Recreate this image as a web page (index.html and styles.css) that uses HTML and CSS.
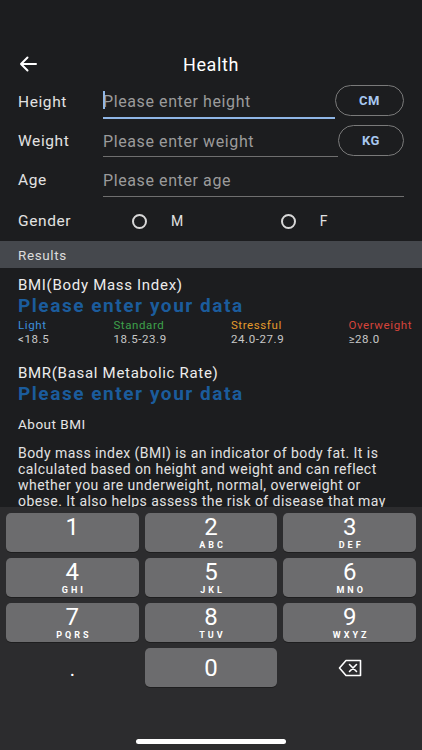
FILE: index.html
```html
<!DOCTYPE html>
<html>
<head>
	<meta charset="UTF-8">
	<title>Health</title>
	<link rel="stylesheet" href="styles.css">
</head>
<body>
	<div class="page">
		<div class="header">
			<div class="back">
				<svg width="18" height="16" viewBox="0 0 18 16"><path d="M17 8H2M8.5 1.5L2 8l6.5 6.5" fill="none" stroke="#fff" stroke-width="2" stroke-linecap="round" stroke-linejoin="round"/></svg>
			</div>
			<h1>Health</h1>
		</div>
		<div class="form">
			<div class="row row_height">
				<span class="label">Height</span>
				<div class="input active"><span class="caret"></span>Please enter height</div>
				<div class="pill pill_cm">CM</div>
			</div>
			<div class="row row_weight">
				<span class="label">Weight</span>
				<div class="input">Please enter weight</div>
				<div class="pill pill_kg">KG</div>
			</div>
			<div class="row row_age">
				<span class="label">Age</span>
				<div class="input">Please enter age</div>
			</div>
			<div class="row row_gender">
				<span class="label">Gender</span>
				<div class="radio radio_m"><i></i>M</div>
				<div class="radio radio_f"><i></i>F</div>
			</div>
		</div>
		<div class="band">Results</div>
		<div class="results">
			<h2>BMI(Body Mass Index)</h2>
			<div class="value">Please enter your data</div>
			<div class="scale">
				<div><span class="c_light">Light</span><span>&lt;18.5</span></div>
				<div><span class="c_std">Standard</span><span>18.5-23.9</span></div>
				<div><span class="c_str">Stressful</span><span>24.0-27.9</span></div>
				<div><span class="c_over">Overweight</span><span>≥28.0</span></div>
			</div>
			<h2 class="bmr">BMR(Basal Metabolic Rate)</h2>
			<div class="value">Please enter your data</div>
			<h3>About BMI</h3>
			<p>Body mass index (BMI) is an indicator of body fat. It is calculated based on height and weight and can reflect whether you are underweight, normal, overweight or obese. It also helps assess the risk of disease that may</p>
		</div>
	</div>
	<div class="keyboard">
		<div class="keys">
			<div class="key"><b>1</b></div>
			<div class="key"><b>2</b><small>ABC</small></div>
			<div class="key"><b>3</b><small>DEF</small></div>
			<div class="key"><b>4</b><small>GHI</small></div>
			<div class="key"><b>5</b><small>JKL</small></div>
			<div class="key"><b>6</b><small>MNO</small></div>
			<div class="key"><b>7</b><small>PQRS</small></div>
			<div class="key"><b>8</b><small>TUV</small></div>
			<div class="key"><b>9</b><small>WXYZ</small></div>
			<div class="key plain"><b class="dot">.</b></div>
			<div class="key zero"><b>0</b></div>
			<div class="key plain">
				<svg width="24" height="18" viewBox="0 0 24 18"><path d="M8 1.5H22.5V16.5H8L1.5 9Z" fill="none" stroke="#fff" stroke-width="1.6" stroke-linejoin="round"/><path d="M11.5 5.5l7 7M18.5 5.5l-7 7" stroke="#fff" stroke-width="1.6" stroke-linecap="round"/></svg>
			</div>
		</div>
		<div class="home"></div>
	</div>
</body>
</html>
```

FILE: styles.css
```css
*{
	margin: 0;
	padding: 0;
	box-sizing: border-box;
}
html, body{
	overflow: hidden;
}
body{
	background: #1c1d1f;
	width: 422px;
	height: 750px;
	font-family: Roboto, "Liberation Sans", sans-serif;
	color: #e6e6e6;
}
.page{
	padding-top: 44px;
	height: 507px;
	overflow: hidden;
}
.header{
	height: 40px;
	display: flex;
	align-items: center;
	justify-content: center;
	position: relative;
}
.back{
	position: absolute;
	left: 19px;
	top: 12px;
}
.header h1{
	font-size: 18px;
	font-weight: 400;
	color: #fff;
	letter-spacing: 0.6px;
}
.form{
	padding: 0 18px;
}
.row{
	display: flex;
	align-items: center;
	height: 40px;
	font-size: 15.5px;
	letter-spacing: 0.6px;
}
.row_weight{
	height: 38px;
}
.row_gender{
	height: 38px;
}
.label{
	width: 85px;
	color: #e2e2e2;
	margin-top: -4px;
}
.input{
	flex: 1;
	align-self: stretch;
	display: flex;
	align-items: center;
	color: #9b9b9b;
	font-size: 16px;
	border-bottom: 1px solid #6f6f6f;
	margin-bottom: 5px;
	padding-top: 2px;
	position: relative;
}
.input.active{
	border-bottom: 2px solid #8fb6e6;
}
.caret{
	position: absolute;
	left: 0;
	top: 7px;
	width: 2px;
	height: 18px;
	background: #8fb6e6;
}
.pill{
	height: 31px;
	border: 1px solid #7a7a7a;
	border-radius: 16px;
	display: flex;
	align-items: center;
	justify-content: center;
	font-size: 13px;
	font-weight: 700;
	color: #a8c8f0;
	letter-spacing: 0.6px;
}
.pill_cm{
	width: 69px;
	margin-top: -8px;
}
.pill_kg{
	width: 66px;
	margin-top: -6px;
}
.row_gender .label{
	margin-top: 0;
}
.radio{
	display: flex;
	align-items: center;
	color: #e2e2e2;
	font-size: 14px;
}
.radio i{
	width: 15px;
	height: 15px;
	border: 2px solid #d8d8d8;
	border-radius: 50%;
	margin-right: 24px;
}
.radio_m{
	margin-left: 29px;
}
.radio_f{
	margin-left: 97px;
}
.band{
	margin-top: 1px;
	height: 27px;
	background: #45484d;
	padding-left: 18px;
	font-size: 13.5px;
	line-height: 29px;
	color: #dcdcdc;
	letter-spacing: 0.6px;
}
.results{
	padding: 7px 10px 0 18px;
}
.results h2{
	font-size: 15px;
	font-weight: 400;
	color: #ececec;
	letter-spacing: 0.7px;
	line-height: 20px;
}
.value{
	font-size: 19px;
	font-weight: 700;
	color: #1b5c9c;
	letter-spacing: 1.55px;
	line-height: 21px;
}
.scale{
	display: flex;
	justify-content: space-between;
	font-size: 11.5px;
	letter-spacing: 0.6px;
	line-height: 14px;
	margin-top: 2px;
}
.scale div{
	display: flex;
	flex-direction: column;
	color: #c8c8c8;
}
.c_light{ color: #3d8fdc; }
.c_std{ color: #3ea14c; }
.c_str{ color: #e39b2c; }
.c_over{ color: #d5443b; }
.results h2.bmr{
	margin-top: 17px;
}
.results h3{
	font-size: 13.5px;
	font-weight: 400;
	color: #e6e6e6;
	letter-spacing: 0.5px;
	margin-top: 11px;
	line-height: 18px;
}
.results p{
	margin-top: 12px;
	font-size: 14px;
	line-height: 16px;
	letter-spacing: 0.45px;
	color: #e2e2e2;
	padding-right: 6px;
}
.keyboard{
	height: 243px;
	background: #2c2c2e;
	padding: 6px 6px 0;
}
.keys{
	display: grid;
	grid-template-columns: repeat(3, 1fr);
	grid-auto-rows: 39px;
	gap: 6px;
}
.key{
	background: #6c6c6e;
	border-radius: 5px;
	display: flex;
	flex-direction: column;
	align-items: center;
	justify-content: flex-start;
	padding-top: 2px;
	color: #fff;
	box-shadow: 0 1px 0 #1e1e1f;
}
.key b{
	font-size: 24px;
	font-weight: 400;
	line-height: 24px;
}
.key small{
	font-size: 9px;
	font-weight: 700;
	letter-spacing: 3px;
	margin-right: -3px;
	margin-top: 2px;
	line-height: 9px;
}
.key.zero{
	justify-content: center;
	padding-top: 0;
}
.key.plain{
	background: none;
	box-shadow: none;
	justify-content: center;
	padding-top: 0;
}
.key b.dot{
	font-size: 20px;
	line-height: 12px;
	margin-top: 2px;
}
.home{
	margin: 52px auto 0;
	width: 150px;
	height: 5px;
	border-radius: 3px;
	background: #fff;
}
```
